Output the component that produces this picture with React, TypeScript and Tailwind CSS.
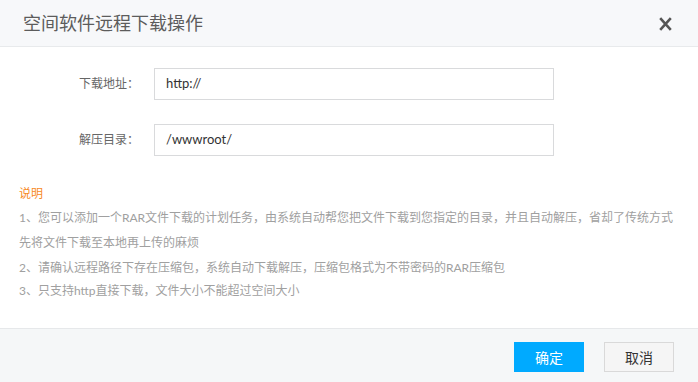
import React from 'react';

const font = "font-['Lato','Noto_Sans_CJK_SC',sans-serif]";

function CloseIcon() {
  return (
    <svg width="13" height="14" viewBox="0 0 13 14" className="block">
      <path d="M1.2 1.2 L11.8 12.8 M11.8 1.2 L1.2 12.8" stroke="#555" strokeWidth="2.6" />
    </svg>
  );
}

function Field({ label, value }: { label: string; value: string }) {
  return (
    <div className="flex items-center">
      <div className="w-[139px] text-right text-[12px] text-[#666]">{label}</div>
      <div className="ml-[15px] flex h-[32px] w-[400px] items-center border border-[#d9dadc] bg-white px-[11px] text-[13px] text-[#333]">
        {value}
      </div>
    </div>
  );
}

export default function App() {
  return (
    <div className={`${font} flex h-[382px] w-[698px] flex-col overflow-hidden bg-white`}>
      {/* header */}
      <div className="flex h-[47px] shrink-0 items-center justify-between border-b border-[#e8eaec] bg-[#f7f8fa] pl-[23px] pr-[26px]">
        <h1 className="text-[18px] leading-none text-[#5c5c5c]">空间软件远程下载操作</h1>
        <button className="flex items-center justify-center pt-[1px]">
          <CloseIcon />
        </button>
      </div>

      {/* body */}
      <div className="flex flex-1 flex-col pt-[21px]">
        <div className="flex flex-col gap-6">
          <Field label="下载地址：" value="http://" />
          <Field label="解压目录：" value="/wwwroot/" />
        </div>

        <div className="mt-[27px] px-[19px] text-[12px]">
          <p className="leading-[22px] text-[#f7891f]">说明</p>
          <div className="text-[#a0a0a0]">
            <p className="whitespace-nowrap leading-[25px]">
              1、您可以添加一个RAR文件下载的计划任务，由系统自动帮您把文件下载到您指定的目录，并且自动解压，省却了传统方式
              <br />
              先将文件下载至本地再上传的麻烦
            </p>
            <p className="leading-[25px]">2、请确认远程路径下存在压缩包，系统自动下载解压，压缩包格式为不带密码的RAR压缩包</p>
            <p className="leading-[22px]">3、只支持http直接下载，文件大小不能超过空间大小</p>
          </div>
        </div>
      </div>

      {/* footer */}
      <div className="flex h-[54px] shrink-0 items-start justify-end gap-5 border-t border-[#e6e8ea] bg-[#f5f7f8] pr-[24px] pt-[13px]">
        <button className="h-[30px] w-[70px] bg-[#00aaff] text-[14px] text-white">确定</button>
        <button className="h-[30px] w-[70px] border border-[#d9d9d9] bg-[#f5f5f5] text-[14px] text-[#333]">取消</button>
      </div>
    </div>
  );
}
